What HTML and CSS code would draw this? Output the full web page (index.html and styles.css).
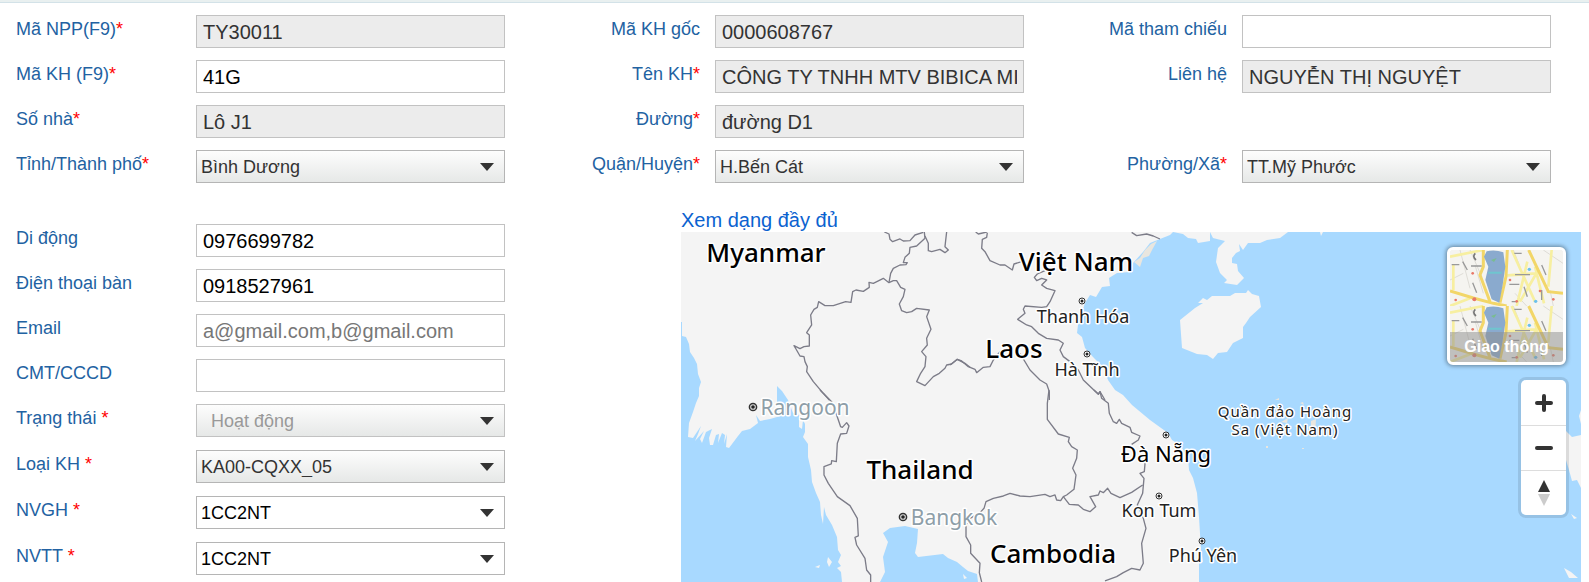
FILE: index.html
```html
<!DOCTYPE html>
<html lang="vi">
<head>
<meta charset="utf-8">
<title>Thông tin khách hàng</title>
<link rel="stylesheet" href="styles.css">
</head>
<body>
<div class="topbar"></div>
<form class="customer">
  <div class="fields">
    <label class="label" for="npp">Mã NPP(F9)<span class="req">*</span></label>
    <input class="input" id="npp" value="TY30011" disabled>
    <label class="label label-end" for="root">Mã KH gốc</label>
    <input class="input" id="root" value="0000608767" disabled>
    <label class="label label-end" for="ref">Mã tham chiếu</label>
    <input class="input" id="ref">

    <label class="label" for="code">Mã KH (F9)<span class="req">*</span></label>
    <input class="input" id="code" value="41G">
    <label class="label label-end" for="name">Tên KH<span class="req">*</span></label>
    <input class="input" id="name" value="CÔNG TY TNHH MTV BIBICA MIỀN ĐÔNG" disabled>
    <label class="label label-end" for="contact">Liên hệ</label>
    <input class="input" id="contact" value="NGUYỄN THỊ NGUYỆT" disabled>

    <label class="label" for="house">Số nhà<span class="req">*</span></label>
    <input class="input" id="house" value="Lô J1" disabled>
    <label class="label label-end" for="street">Đường<span class="req">*</span></label>
    <input class="input" id="street" value="đường D1" disabled>

    <label class="label first" for="province">Tỉnh/Thành phố<span class="req">*</span></label>
    <div class="combo"><select class="select" id="province"><option>Bình Dương</option></select></div>
    <label class="label label-end" for="district">Quận/Huyện<span class="req">*</span></label>
    <div class="combo"><select class="select" id="district"><option>H.Bến Cát</option></select></div>
    <label class="label label-end" for="ward">Phường/Xã<span class="req">*</span></label>
    <div class="combo"><select class="select" id="ward"><option>TT.Mỹ Phước</option></select></div>
  </div>

  <div class="lower">
    <div class="details">
      <div class="row"><label class="label" for="mobile">Di động</label><input class="input" id="mobile" value="0976699782"></div>
      <div class="row"><label class="label" for="phone">Điện thoại bàn</label><input class="input" id="phone" value="0918527961"></div>
      <div class="row"><label class="label" for="email">Email</label><input class="input" id="email" placeholder="a@gmail.com,b@gmail.com"></div>
      <div class="row"><label class="label" for="idcard">CMT/CCCD</label><input class="input" id="idcard"></div>
      <div class="row row-select"><label class="label" for="status">Trạng thái <span class="req">*</span></label><div class="combo"><select class="select" id="status" disabled><option>Hoạt động</option></select></div></div>
      <div class="row row-select"><label class="label" for="type">Loại KH <span class="req">*</span></label><div class="combo"><select class="select" id="type"><option>KA00-CQXX_05</option></select></div></div>
      <div class="row row-select"><label class="label" for="nvgh">NVGH <span class="req">*</span></label><div class="combo"><select class="select select-plain" id="nvgh"><option>1CC2NT</option></select></div></div>
      <div class="row row-select"><label class="label" for="nvtt">NVTT <span class="req">*</span></label><div class="combo"><select class="select select-plain" id="nvtt"><option>1CC2NT</option></select></div></div>
    </div>

    <div class="location">
      <a class="full-link" href="#map">Xem dạng đầy đủ</a>
      <div class="map" id="map">
        <svg class="map-canvas" viewBox="681 232 900 350" preserveAspectRatio="xMidYMid slice" role="img" aria-label="Bản đồ">
          <defs>
            <g id="town"><circle r="3" fill="#fff" stroke="#333" stroke-width="1"/><circle r="1.5" fill="#222"/></g>
            <g id="city"><circle r="3.6" fill="#ddd" stroke="#333" stroke-width="1.5"/><circle r="1.8" fill="#222"/></g>
          </defs>
          <g class="land">
            <path d="M681,232V322H682V336L686,337 689,344 690,352 694,358 697,364 698,374 701,382 699,388 699,396 696,403 693,412 689,423 688,437 693,438 701,426 698,434 695,441 704,431 700,439 702,443 706,432 712,429 709,438 710,445 713,445 716,435 719,434 718,443 722,433 725,435 724,444 727,434 726,447 729,448 738,436 742,431 750,429 758,423 756,415 754,412 760,421 770,419 777,417 785,414 777,402 777,386 782,391 788,400 793,413 799,415 799,427 802,429 803,420 805,424 805,432 803,437 808,444 808,457 811,470 812,482 816,493 820,502 821,515 823,524 824,507 826,515 832,525 837,537 838,550 841,555 838,562 841,566 837,568 841,572 842,582H880L885,572 883,557 888,542 883,533 890,528 905,526 918,529 917,543 915,553 918,557 943,554 948,558 957,562 963,567 968,571 977,574 978,582H1199V563L1203,562 1201,550 1199,517 1197,493 1193,478 1189,470 1188,457 1180,445 1172,440 1168,433 1150,420 1132,405 1123,395 1115,390 1108,380 1103,367 1093,357 1085,348 1082,337 1077,333 1078,325 1085,303 1090,295 1096,297 1102,287 1110,286 1109,278 1117,273 1130,272 1133,263 1143,252 1150,243 1160,239 1170,235 1173,232 1183,234 1188,238 1196,239 1198,243 1210,241 1210,232 1213,238 1225,241 1218,248 1216,262 1220,273 1227,280 1224,283 1237,285 1244,278 1238,271 1237,264 1232,263 1232,258 1236,253 1240,251 1239,244 1243,250 1248,243 1260,243 1267,240 1280,238 1288,232Z"/>
            <path d="M1180,320 1195,308 1203,303 1198,303 1203,298 1207,300 1212,296 1230,296 1235,293 1246,293 1248,290 1252,294 1259,296 1261,307 1250,317 1246,323 1243,327 1243,338 1233,343 1227,352 1218,353 1213,359 1207,355 1197,354 1182,348Z"/>
            <path d="M1581,435 1572,437 1566,431V460L1569,470 1572,481 1577,480 1581,488ZM1581,410 1579,416 1581,424ZM1571,514 1577,518 1574,519ZM1564,568 1571,572 1578,578 1569,578ZM828,557 832,562 829,567 827,562ZM815,567 820,565 819,568ZM963,574 967,578 964,579ZM1320,232H1323L1321,236Z"/>
            <path class="atoll" d="M1275,400 1279,398V400ZM1300,403 1303,402 1304,405ZM1281,422 1288,418 1287,423ZM1294,426 1297,425V427ZM1311,421 1316,419 1315,437 1311,437ZM1266,446H1268V448H1266ZM1302,448H1304V449H1302ZM1134,262 1140,258 1145,250 1151,244 1157,241 1152,250 1149,256 1143,258 1140,267Z"/>
          </g>
          <g class="borders">
            <g transform="translate(670 200) scale(.3333)">
              <path d="M643,96 657,102 660,118 668,125 690,117 700,123 720,122 735,105 760,97"/>
              <path d="M763,96 765,115 740,138 720,142 718,160 705,172 700,188 712,188 708,194 690,195 670,205 662,220 657,248"/>
              <path d="M765,108 775,130 775,152 785,155 810,148 825,158 835,150 825,140 830,96"/>
              <path d="M478,600 460,580 430,545 410,515 412,500 405,485 402,470 390,468 378,447 372,437 390,446 402,440 418,438 418,405 410,398 425,375 422,345 432,328 442,322 446,305 465,317 490,317 527,305 543,307 548,275 558,270 580,274 598,262 597,247 610,250 640,235 657,248 670,242 680,242 692,262 705,268 700,290 688,312 695,332 710,338 725,335 740,325 778,330 770,350 783,388 770,415 772,435 755,455 768,470 765,500 752,520 740,545 765,557 790,530 808,520 825,505 830,495 845,492 862,478 885,490 900,502"/>
            </g>
            <g transform="translate(670 390) scale(.3333)">
              <path d="M450,0 485,35 500,75 512,110 517,112 530,98 537,108 530,130 512,132 502,160 499,215 485,212 484,222 462,230 462,255 475,280 502,320 540,347 562,385 565,438 555,442 560,465 585,505 590,540 602,555 602,576"/>
            </g>
            <g transform="translate(950 200) scale(.3333)">
              <path d="M77,96 85,102 110,96M112,98 110,112 97,118 95,145 105,155 120,182 150,195 165,195 187,210 192,192 215,185"/>
              <path d="M285,212 262,222 253,232 260,242 275,235 290,240 275,255 290,265 315,272 300,305 290,320 275,322 225,318 220,328 225,340 203,358 230,375 245,380 265,400 290,415 325,420 340,430 330,450 340,470 360,485 385,510 400,540 445,583 450,575 465,600"/>
              <path d="M0,495 22,478 35,483 55,500 75,508 80,518 100,502 120,500 130,480 150,455"/>
              <path d="M210,460 240,510 270,540 290,552 298,575 298,600M545,97 560,107 590,102 610,108 630,117"/>
            </g>
            <g transform="translate(950 390) scale(.3333)">
              <path d="M297,0 292,40 292,88 325,132 358,142 355,155 365,170 382,180 380,205 368,235 378,255 372,298 350,315 340,320 332,332 320,330 315,315 300,320 285,313 240,320 210,318 180,310 160,318 130,325 108,335 102,355 90,368 60,385 48,405 48,440 62,465 62,490 90,520 88,548 95,576"/>
              <path d="M340,320 358,343 385,345 400,358 420,365 437,350 420,320 445,315 450,303 460,308 473,295 483,310 510,323 545,307 578,285"/>
              <path d="M432,0 445,12 450,5 455,25 475,40 478,70 490,95 500,100 508,88 515,100 540,112 545,127 570,138 565,150 545,163"/>
              <path d="M587,200 583,245 570,250 582,265 578,310 562,345 580,385 588,415 575,460 580,520 570,540 545,535 520,548 500,560 465,573"/>
            </g>
          </g>
          <g>
            <use href="#city" x="753" y="407"/><use href="#city" x="903" y="517"/>
            <use href="#town" x="1082" y="301"/><use href="#town" x="1087" y="354"/><use href="#town" x="1166" y="435"/><use href="#town" x="1159" y="496"/><use href="#town" x="1202" y="541"/>
          </g>
          <g class="country">
            <text x="766" y="262">Myanmar</text>
            <text x="1076" y="271">Việt Nam</text>
            <text x="1014" y="358">Laos</text>
            <text x="920" y="479">Thailand</text>
            <text x="1053" y="563">Cambodia</text>
          </g>
          <g class="capital">
            <text x="805" y="415">Rangoon</text>
            <text x="954" y="525">Bangkok</text>
          </g>
          <g class="place">
            <text x="1083" y="323">Thanh Hóa</text>
            <text x="1087" y="376">Hà Tĩnh</text>
            <text class="major" x="1166" y="462">Đà Nẵng</text>
            <text x="1159" y="517">Kon Tum</text>
            <text x="1203" y="562">Phú Yên</text>
            <text class="islands" x="1285" y="417">Quần đảo Hoàng</text>
            <text class="islands" x="1285" y="435">Sa (Việt Nam)</text>
          </g>
        </svg>
        <div class="controls">
          <button class="layer" type="button">
            <svg class="layer-thumb" viewBox="90 60 339 336" preserveAspectRatio="none" aria-hidden="true">
              <defs>
                <g id="tile">
                  <path fill="#f5f4f0" d="M90,60H429V228H90Z"/>
                  <g fill="none" stroke="#dedcd6" stroke-width="3"><path d="M120,60 150,175M165,105 190,190M90,150 130,130M280,60 300,110M370,60 429,100M285,190 320,228M390,180 400,228M150,60 185,140"/></g>
                  <g fill="none" stroke="#f7efa0" stroke-width="8"><path d="M100,105V180M90,80 190,60M262,136 350,130M275,60 345,215M322,95 290,228M355,120 300,215M345,110 372,220M395,60 385,170M90,228 150,205"/></g>
                  <g fill="none" stroke="#f2d668" stroke-width="9"><path d="M90,183 160,204 220,220 260,228M326,60 385,185 429,190M262,60 258,140 240,218M190,60 190,110 180,135 210,215"/></g>
                  <path fill="#8aaace" d="M200,64Q225,58 250,67L256,110 248,165 238,218 215,208 196,150 205,110 192,80Z"/>
                  <path d="M205,128H245" stroke="#6fc5cf" stroke-width="6"/><path d="M213,90 230,84 222,96Z" fill="#79bc91"/>
                  <path d="M166,70Q156,80 168,90" fill="none" stroke="#777" stroke-width="5"/>
                  <g stroke="#999" stroke-width="4"><path d="M153,108H185M268,163H298M285,134H330M128,95 142,120M158,158 170,188M283,70H305M312,170 322,200M365,105 378,135M95,104H118M365,180V210M275,215H292"/></g>
                  <g fill="#e87868"><circle cx="158" cy="130" r="4"/><circle cx="107" cy="210" r="4"/><circle cx="163" cy="208" r="6"/><circle cx="290" cy="214" r="4"/><circle cx="270" cy="150" r="4"/><circle cx="360" cy="183" r="4"/><circle cx="400" cy="208" r="4"/></g>
                  <g fill="#6bc0ec"><circle cx="328" cy="118" r="5"/><circle cx="347" cy="214" r="5"/></g>
                </g>
              </defs>
              <use href="#tile"/><use href="#tile" y="168"/>
            </svg>
            <span class="layer-name">Giao thông</span>
          </button>
          <div class="zoom">
            <button class="zoom-btn" type="button" aria-label="Phóng to"><svg width="20" height="20" viewBox="0 0 20 20"><path d="M3 10H17M10 3V17" stroke="#333" stroke-width="4" stroke-linecap="round"/></svg></button>
            <button class="zoom-btn" type="button" aria-label="Thu nhỏ"><svg width="20" height="20" viewBox="0 0 20 20"><path d="M3 10H17" stroke="#333" stroke-width="4" stroke-linecap="round"/></svg></button>
            <button class="zoom-btn" type="button" aria-label="Đặt lại hướng bắc"><svg width="12" height="28" viewBox="0 0 12 28"><path d="M6 1 12 13H0Z" fill="#333"/><path d="M0 15H12L6 27Z" fill="#ccc"/></svg></button>
          </div>
        </div>
      </div>
    </div>
  </div>
</form>
</body>
</html>
```

FILE: styles.css
```css
* { box-sizing: border-box; }

body {
  margin: 0;
  background: #fff;
  font-family: "Liberation Sans", Arial, sans-serif;
  font-size: 18px;
}

.topbar {
  height: 3px;
  background: #e9f0f0;
  border-bottom: 1px solid #d3e2e8;
}

.fields {
  display: grid;
  grid-template-columns: 180px 1fr 210px 1fr 218px 1fr;
  row-gap: 12px;
  padding: 12px 38px 0 16px;
}

.label {
  line-height: 29px;
  color: #2262a2;
}

.label-end {
  padding-right: 15px;
  text-align: right;
}

.first { grid-column: 1; }

.req { color: #f00; }

.input,
.select {
  display: block;
  width: 100%;
  min-width: 0;
  height: 33px;
  margin: 0;
  border: 1px solid #c2c2c2;
  border-radius: 0;
  background: #fff;
  color: #000;
  font-family: inherit;
}

.input {
  padding: 1px 6px 0;
  font-size: 20px;
}

.input:disabled {
  background: #ececec;
  color: #333;
}

.input::placeholder { color: #777; }

.combo {
  position: relative;
  min-width: 0;
}

.combo::after {
  content: "";
  position: absolute;
  top: 13px;
  right: 11px;
  width: 14px;
  height: 8px;
  background: #333;
  clip-path: polygon(0 0, 100% 0, 50% 100%);
  pointer-events: none;
}

.select {
  appearance: none;
  padding: 0 30px 0 4px;
  border-color: #b5b5b5;
  background: linear-gradient(#fdfdfd, #e6e8e7);
  color: #333;
  font-size: 18px;
}

.select:disabled {
  padding-left: 14px;
  border-color: #c2c2c2;
  color: #999;
  opacity: 1;
}

.select-plain {
  background: #fff;
  color: #000;
}

.lower {
  display: grid;
  grid-template-columns: 489fr 900fr;
  column-gap: 176px;
  padding: 25px 8px 0 16px;
}

.details { padding-top: 16px; }

.row {
  display: grid;
  grid-template-columns: 180px 1fr;
  margin-bottom: 12px;
}

.row-select { margin-bottom: 13px; }

.row:last-child { margin-bottom: 0; }

.location {
  display: flex;
  flex-direction: column;
  min-width: 0;
}

.full-link {
  height: 24px;
  color: #0b62d0;
  font-size: 20px;
  line-height: 24px;
  text-decoration: none;
}

.map {
  position: relative;
  overflow: hidden;
  background: #a8d9ff;
}

.map-canvas {
  display: block;
  width: 100%;
  height: 350px;
  font-family: "Noto Sans", sans-serif;
  text-anchor: middle;
}

.land { fill: #f4f4f4; }

.atoll { fill: #e9e6df; }

.borders {
  fill: none;
  stroke: #7c7c88;
  stroke-width: 4px;
  stroke-linejoin: round;
}

.country,
.capital,
.place {
  stroke: #fff;
  stroke-width: 3px;
  stroke-linejoin: round;
  paint-order: stroke;
}

.country {
  fill: #000;
  font-size: 26px;
  font-weight: 500;
}

.capital {
  fill: #8e9ea8;
  font-size: 21px;
}

.place {
  fill: #222;
  font-size: 18px;
}

.major {
  fill: #000;
  font-size: 22px;
}

.islands {
  font-size: 15px;
  letter-spacing: 1px;
}

.controls {
  position: absolute;
  top: 15px;
  right: 15px;
  display: flex;
  flex-direction: column;
  align-items: flex-end;
  gap: 15px;
}

.layer {
  display: grid;
  width: 119px;
  height: 118px;
  padding: 0;
  overflow: hidden;
  border: 3px solid #fff;
  border-radius: 6px;
  box-shadow: 0 0 4px 1px rgba(0, 0, 0, 0.4);
}

.layer-thumb,
.layer-name { grid-area: 1 / 1; }

.layer-thumb {
  width: 100%;
  height: 112px;
}

.layer-name {
  align-self: end;
  background: rgba(140, 140, 140, 0.5);
  color: #fff;
  font: bold 16px/30px "Liberation Sans", Arial, sans-serif;
}

.zoom {
  display: flex;
  flex-direction: column;
  border-radius: 5px;
  box-shadow: 0 0 0 3px rgba(0, 0, 0, 0.1);
}

.zoom-btn {
  display: grid;
  place-items: center;
  width: 45px;
  height: 45px;
  padding: 0;
  border: 0;
  background: #fff;
}

.zoom-btn:first-child { border-radius: 5px 5px 0 0; }

.zoom-btn:last-child { border-radius: 0 0 5px 5px; }

.zoom-btn + .zoom-btn { border-top: 1px solid #ddd; }
```
